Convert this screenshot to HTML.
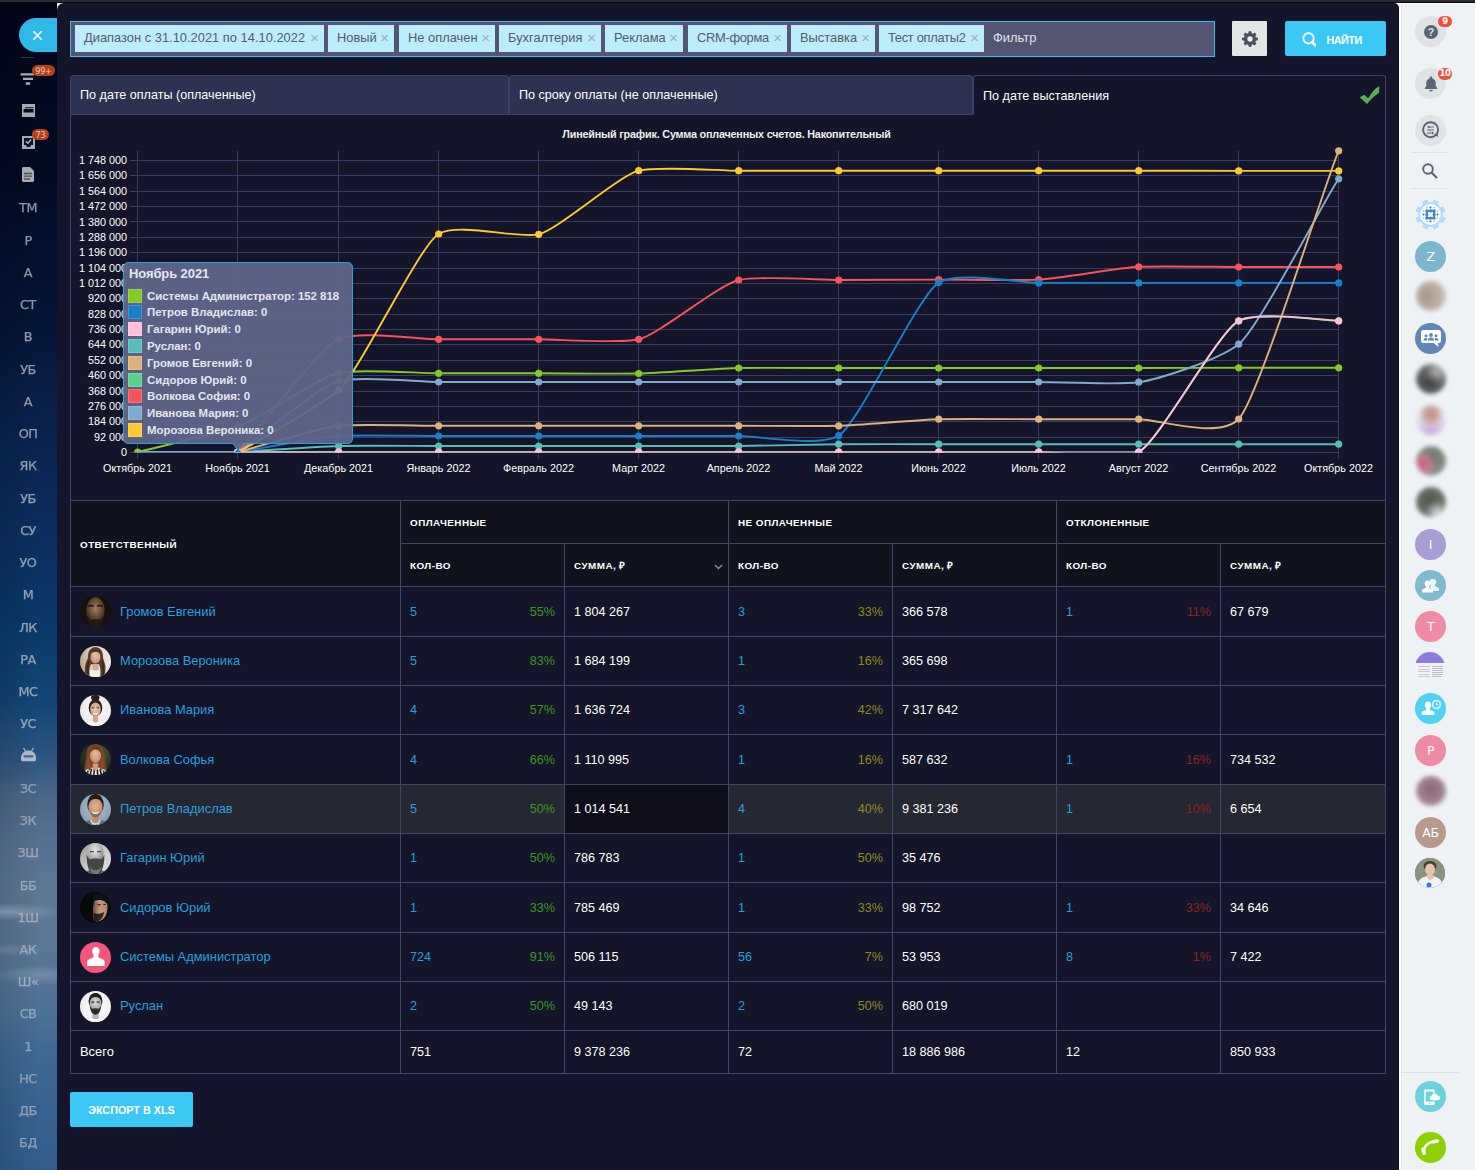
<!DOCTYPE html>
<html lang="ru"><head><meta charset="utf-8"><title>Отчет по счетам</title>
<style>
*{box-sizing:border-box;margin:0;padding:0}
html,body{width:1475px;height:1170px;overflow:hidden;background:#14152a;font-family:"Liberation Sans",Arial,sans-serif}
body{position:relative}
i{display:block;font-style:normal}
#topbar{position:absolute;left:0;top:0;width:1475px;height:3px;background:#2a2935;border-bottom:1px solid #08080a}
#left{position:absolute;left:0;top:0;width:57px;height:1170px;overflow:hidden;
 background:
 radial-gradient(ellipse 60px 9px at 8px 912px,rgba(190,205,222,.38),rgba(190,205,222,0) 100%),
 radial-gradient(ellipse 50px 10px at 40px 975px,rgba(180,198,216,.30),rgba(180,198,216,0) 100%),
 radial-gradient(ellipse 40px 7px at 5px 950px,rgba(180,198,216,.18),rgba(180,198,216,0) 100%),
 linear-gradient(90deg,rgba(0,0,0,.12),rgba(0,0,0,0) 70%),
 linear-gradient(180deg,#02051a 0,#020a22 14%,#051637 28%,#0a2a58 42%,#0a3768 52%,#124574 60%,#2b5580 64.500%,#4a6786 68%,#577290 72%,#5d7893 76%,#5a7794 81%,#4f7396 86%,#3f6993 90%,#37628f 95%,#325d8b 100%)}
#left>*{position:absolute}
.lclose{left:19px;top:18px;width:38px;height:34px;border-radius:17px 0 0 17px;background:#2fb9e8;display:flex;align-items:center;justify-content:flex-start;padding-left:13px}
.lsep{left:21px;top:57px;width:13px;height:1px;background:#2b3350}
.li{display:block}
.lb{height:11px;border-radius:6px;background:#b5401c;color:#ecc4b6;font-size:8.200px;line-height:12px;text-align:center;font-family:"DejaVu Sans","Liberation Sans",sans-serif;letter-spacing:-.3px}
.lt{left:0;width:56px;text-align:center;font-size:12.8px;line-height:20px;color:#d2d4d9;-webkit-text-stroke:.25px #d2d4d9;font-family:"DejaVu Sans","Liberation Sans",sans-serif;letter-spacing:-.5px}
#main{position:absolute;left:57px;top:3px;width:1342px;height:1167px;background:#14152a;border-radius:7px 5px 0 0}
#corner{position:absolute;left:57px;top:3px;width:7px;height:7px;background:#e8ecef}
#corner2{position:absolute;left:1392px;top:3px;width:7px;height:7px;background:#fff}
#abs{position:absolute;left:0;top:0;width:1475px;height:1170px}
#abs>*{position:absolute}
.fbox{left:70px;top:21px;width:1145px;height:36px;background:#535573;border:1px solid #35bdf0}
.chip{top:25px;height:27px;background:#bcedfc;color:#535c69;font-size:12.9px;line-height:26px;padding-left:9px;white-space:nowrap;overflow:hidden}
.chip b{font-weight:normal;color:#a3aab2;font-size:15px;position:absolute;right:5px;top:0}
.fph{left:993px;top:25px;line-height:26px;font-size:12.9px;color:#dfe1ea}
.gear{left:1232px;top:21px;width:35px;height:35px;background:#e4e5e6;border-radius:1px;display:flex;align-items:center;justify-content:center}
.find{left:1285px;top:21px;width:101px;height:35px;background:#3cc8f5;border-radius:2px;color:#fff;font-weight:bold;font-size:10.8px;display:flex;align-items:center;padding-left:17px;letter-spacing:-.5px}
.find span{margin-left:10.500px;position:relative;top:1.300px}
.tab{top:75px;height:40px;background:#2c3250;border:1px solid #3c4068;border-radius:3px 3px 0 0;color:#fff;font-size:12.6px;line-height:38px;padding-left:9px}
.tab.act{background:#14152a;border-bottom-color:#14152a;line-height:40px}
.chk{left:1359px;top:85px}
.panel{left:70px;top:114px;width:1316px;height:387px;border:1px solid #3c4068;border-top:0}
.chart{left:70px;top:116px;font-family:"Liberation Sans",Arial,sans-serif}
.tt{left:123px;top:262px;width:230px;height:182px;background:rgba(95,102,137,.94);border:1px solid #2f9fd8;border-radius:5px;color:#e3e6f2;font-weight:bold;font-family:"Liberation Sans",sans-serif}
.tt-t{position:absolute;left:5px;top:2px;font-size:13px;line-height:18px;letter-spacing:-.1px}
.tt-r{position:absolute;left:4px;height:15px;white-space:nowrap}
.tt-r i{position:absolute;left:0;top:0;width:14px;height:14px;box-shadow:inset 0 0 0 1px rgba(255,255,255,.18)}
.tt-r span{position:absolute;left:19px;top:0;font-size:11.4px;line-height:15px;letter-spacing:0}
.tt-p{left:230.500px;top:442.500px}
.th-bg{background:#10131d}
.hov{background:#252733}
.hov2{background:#0e0f1b}
.ln{background:#41456d}
.th{color:#fff;font-weight:bold;font-size:9.900px;line-height:14px;letter-spacing:.45px;text-transform:uppercase;white-space:nowrap}
.td{color:#fff;font-size:12.6px;line-height:20px;white-space:nowrap}
.td.nm,.td.lk{color:#2b9fdb}
.td.nm,.td.nm2{font-size:12.900px}
.td.pc{text-align:right}
.td.g{color:#3d961f}.td.o{color:#8d8b20}.td.r{color:#8b2320}
.avw{width:31px;height:31px}
.av{display:block}
.chev{display:block}
.xls{left:70px;top:1092px;width:123px;height:34.500px;background:#3cc8f5;border-radius:2px;color:#fff;font-weight:bold;font-size:10.800px;line-height:36.500px;text-align:center;letter-spacing:0}
#right{position:absolute;left:1399px;top:0;width:76px;height:1170px;background:#eef2f4}
#right>*{position:absolute}
.rc{border-radius:50%;display:flex;align-items:center;justify-content:center}
.rt{color:#fff;letter-spacing:-.4px;font-size:12.500px;font-family:"DejaVu Sans","Liberation Sans",sans-serif}
.rb{height:12px;border-radius:6px;background:#f0503c;color:#fff;font-size:8.500px;font-weight:bold;letter-spacing:-.4px;line-height:12px;text-align:center;font-family:"DejaVu Sans","Liberation Sans",sans-serif}
.rsep{left:12px;width:38px;height:1px;background:#dde2e6}
.ri{display:block}
.rbl{left:16.500px;width:30px;height:30px;border-radius:50%;filter:blur(2.200px)}
</style></head><body>
<div id="left">
<div class="lclose"><svg width="11" height="11" viewBox="0 0 11 11"><path d="M1.300 1.300l8.400 8.400M9.700 1.300l-8.400 8.400" stroke="#fff" stroke-width="1.600" fill="none"/></svg></div>
<i class="lsep"></i>
<svg class="li" style="left:20px;top:73px" width="16" height="13" viewBox="0 0 16 13"><path d="M0.600 0.200h13.300v2.300H0.600zM3 4.700h10v2.300H3zM5.800 9.300h4.300v2.400H5.800z" fill="#a9aaad"/></svg>
<span class="lb" style="left:32px;top:65px;width:23px">99+</span>
<svg class="li" style="left:22px;top:104px" width="13" height="13" viewBox="0 0 13 13"><path d="M0 0h13v13H0z" fill="#a9aaad"/><path d="M3 3.200h8.500v1.100H3zM1.500 5h10v3.500h-10z" fill="#060d26"/></svg>
<svg class="li" style="left:22px;top:135px" width="13" height="14" viewBox="0 0 13 14"><path d="M0 1h13v13H0z" fill="#a9aaad"/><path d="M2 3h9v7H9l-.8 2H4.800L4 10H2z" fill="#0a1230"/><path d="M3.800 6.300l2 2 3.300-3.800" stroke="#b5b6b9" stroke-width="1.300" fill="none"/></svg>
<span class="lb" style="left:32px;top:129px;width:17px">73</span>
<svg class="li" style="left:22px;top:167px" width="12" height="15" viewBox="0 0 12 15"><path d="M0 1.500C0 .7.700 0 1.500 0H8l4 4v9.500c0 .8-.7 1.500-1.500 1.500h-9C.7 15 0 14.300 0 13.500z" fill="#a9aaad"/><path d="M2 6.500h8M2 9.200h8M2 12h6" stroke="#4a5060" stroke-width="1.300"/></svg>
<div class="lt" style="top:197.8px;opacity:0.68">ТМ</div>
<div class="lt" style="top:230.8px;opacity:0.68">Р</div>
<div class="lt" style="top:262.8px;opacity:0.68">А</div>
<div class="lt" style="top:294.8px;opacity:0.68">СТ</div>
<div class="lt" style="top:326.8px;opacity:0.68">В</div>
<div class="lt" style="top:359.8px;opacity:0.68">УБ</div>
<div class="lt" style="top:391.8px;opacity:0.68">А</div>
<div class="lt" style="top:423.8px;opacity:0.68">ОП</div>
<div class="lt" style="top:455.8px;opacity:0.68">ЯК</div>
<div class="lt" style="top:488.8px;opacity:0.68">УБ</div>
<div class="lt" style="top:520.8px;opacity:0.68">СУ</div>
<div class="lt" style="top:552.8px;opacity:0.68">УО</div>
<div class="lt" style="top:584.8px;opacity:0.68">М</div>
<div class="lt" style="top:617.8px;opacity:0.68">ЛК</div>
<div class="lt" style="top:649.8px;opacity:0.68">РА</div>
<div class="lt" style="top:681.8px;opacity:0.68">МС</div>
<div class="lt" style="top:713.8px;opacity:0.68">УС</div>
<div class="lt" style="top:778.8px;opacity:0.55">ЗС</div>
<div class="lt" style="top:810.8px;opacity:0.55">ЗК</div>
<div class="lt" style="top:842.8px;opacity:0.55">ЗШ</div>
<div class="lt" style="top:875.8px;opacity:0.55">ББ</div>
<div class="lt" style="top:907.8px;opacity:0.55">1Ш</div>
<div class="lt" style="top:939.8px;opacity:0.55">АК</div>
<div class="lt" style="top:971.8px;opacity:0.55">Ш«</div>
<div class="lt" style="top:1003.8px;opacity:0.55">СВ</div>
<div class="lt" style="top:1036.8px;opacity:0.55">1</div>
<div class="lt" style="top:1068.8px;opacity:0.55">НС</div>
<div class="lt" style="top:1100.8px;opacity:0.55">ДБ</div>
<div class="lt" style="top:1132.8px;opacity:0.55">БД</div>
<svg class="li" style="left:20px;top:747px" width="17" height="15" viewBox="0 0 17 15"><path d="M3.500 1l2 3M13.500 1l-2 3" stroke="#aeb8c6" stroke-width="1.300"/><path d="M1 11.500C1 6.500 4 3.500 8.500 3.500S16 6.500 16 11.500v1c0 1-.8 1.800-1.800 1.800H2.800c-1 0-1.800-.8-1.800-1.800z" fill="#aeb8c6"/><rect x="3.500" y="8.300" width="10" height="2.300" rx="1.100" fill="#3c6790"/></svg>
</div>
<div id="corner"></div><div id="corner2"></div>
<div id="main"></div>
<div id="right">
<i style="left:0;top:0;width:1.500px;height:1170px;background:#fff"></i><i style="left:1.500px;top:0;width:1px;height:1170px;background:#e1e7ea"></i><i style="left:0;top:3px;width:76px;height:1px;background:#fff"></i>
<div class="rc" style="top:16.0px;width:31.0px;height:31.0px;left:16.0px;background:#dfe3e6;"><svg width="14" height="14" viewBox="0 0 14 14"><circle cx="7" cy="7" r="7" fill="#5a6472"/><text x="7" y="11" font-size="10.500" font-weight="bold" fill="#dfe3e6" text-anchor="middle" font-family="Liberation Sans,sans-serif">?</text></svg></div>
<span class="rb" style="left:39px;top:16px;width:14px;height:10.500px;line-height:10.500px">9</span>
<div class="rc" style="top:68.0px;width:31.0px;height:31.0px;left:16.0px;background:#dfe3e6;"><svg width="14" height="16" viewBox="0 0 14 16"><path d="M7 0.500c.7 0 1.200.5 1.200 1.200v.5c2.200.6 3.500 2.500 3.500 4.800v3l1.600 2.200v.8H.7v-.8l1.600-2.200V7c0-2.300 1.300-4.200 3.500-4.800v-.5C5.800 1 6.300.5 7 .5zM5.300 14h3.400c0 .9-.8 1.600-1.700 1.600s-1.700-.7-1.700-1.600z" fill="#5a6472"/></svg></div>
<span class="rb" style="left:39px;top:68px;width:14px;height:11.500px;line-height:11.500px">10</span>
<div class="rc" style="top:114.5px;width:31.0px;height:31.0px;left:16.0px;background:#dfe3e6;"><svg width="20" height="20" viewBox="0 0 20 20" style="margin:0 0 0 1.500px"><circle cx="9.600" cy="9.700" r="7.500" fill="none" stroke="#5a6472" stroke-width="1.900"/><path d="M13.300 14.800l4.200 2.300-1.500-4.300z" fill="#5a6472"/><path d="M7 7h5.800M6 10h7M6.200 13h5.800" stroke="#5a6472" stroke-width="1.100" fill="none"/><path d="M8.300 5.400L6 7l2.300 1.600zM11 11.400l2.300 1.600L11 14.600z" fill="#5a6472"/></svg></div>
<i class="rsep" style="top:152px"></i>
<svg class="ri" style="left:22px;top:162px" width="18" height="18" viewBox="0 0 18 18"><circle cx="7" cy="7" r="4.800" fill="none" stroke="#5a6472" stroke-width="1.900"/><path d="M10.500 10.500l5.500 5.500" stroke="#5a6472" stroke-width="2.200"/></svg>
<i class="rsep" style="top:188px"></i>
<svg class="ri" style="left:15.700px;top:198.900px" width="31" height="31" viewBox="-15.500 -15.500 31 31"><g fill="#b3ddf9"><circle r="12.400"/><rect x="-2.900" y="-15.200" width="5.800" height="6" rx="1" transform="rotate(22.5)"/><rect x="-2.900" y="-15.200" width="5.800" height="6" rx="1" transform="rotate(67.5)"/><rect x="-2.900" y="-15.200" width="5.800" height="6" rx="1" transform="rotate(112.5)"/><rect x="-2.900" y="-15.200" width="5.800" height="6" rx="1" transform="rotate(157.5)"/><rect x="-2.900" y="-15.200" width="5.800" height="6" rx="1" transform="rotate(202.5)"/><rect x="-2.900" y="-15.200" width="5.800" height="6" rx="1" transform="rotate(247.5)"/><rect x="-2.900" y="-15.200" width="5.800" height="6" rx="1" transform="rotate(292.5)"/><rect x="-2.900" y="-15.200" width="5.800" height="6" rx="1" transform="rotate(337.5)"/></g><circle r="10.400" fill="#fbfdff"/><rect x="-3.600" y="-3.600" width="7.200" height="7.200" fill="none" stroke="#4790cd" stroke-width="2.200"/><g fill="#3f89c8"><circle cx="-3.6" cy="-3.6" r="1.550"/><circle cx="-3.6" cy="0.0" r="1.550"/><circle cx="-3.6" cy="3.6" r="1.550"/><circle cx="0.0" cy="-3.6" r="1.550"/><circle cx="0.0" cy="3.6" r="1.550"/><circle cx="3.6" cy="-3.6" r="1.550"/><circle cx="3.6" cy="0.0" r="1.550"/><circle cx="3.6" cy="3.6" r="1.550"/></g><g fill="#3b78c4"><rect x="-.850" y="-.850" width="1.700" height="1.700" transform="translate(0 -7) rotate(45)"/><rect x="-.850" y="-.850" width="1.700" height="1.700" transform="translate(0 7) rotate(45)"/><rect x="-.850" y="-.850" width="1.700" height="1.700" transform="translate(-7 0) rotate(45)"/><rect x="-.850" y="-.850" width="1.700" height="1.700" transform="translate(7 0) rotate(45)"/></g><g stroke="#8fbbe3" stroke-width=".9"><path d="M-4.4 -7.0h1.800"/><path d="M-4.4 7.0h1.800"/><path d="M2.6 -7.0h1.800"/><path d="M2.6 7.0h1.800"/><path d="M-7.0 -4.3v1.600"/><path d="M-7.0 2.7v1.600"/><path d="M7.0 -4.3v1.600"/><path d="M7.0 2.7v1.600"/></g><g stroke="#7fb0de" stroke-width=".7"><path d="M0 -5.200V-6.200M0 5.200V6.200M-5.200 0H-6.200M5.200 0H6.200"/></g><circle r="1.500" fill="#fff"/><path d="M-1.200 -1.200L1.200 1.200M1.200 -1.200L-1.200 1.200" stroke="#f3d9c8" stroke-width=".5"/></svg>
<div class="rc" style="top:241.0px;width:31.0px;height:31.0px;left:16.0px;background:#7db7cf;"><span class="rt">Z</span></div>
<div class="rbl" style="top:281.0px;background:radial-gradient(circle at 35% 50%,#a89686 0,#b9aba0 45%,#d4ccc6 100%)"></div>
<div class="rc" style="top:323.0px;width:31.0px;height:31.0px;left:16.0px;background:#5f86b5;"><svg width="20" height="18" viewBox="0 0 20 18"><path d="M2.500 0h15a2.500 2.500 0 0 1 2.500 2.500v8a2.500 2.500 0 0 1-2.500 2.500h-.5l.5 4-5-4H2.500a2.500 2.500 0 0 1-2.500-2.500v-8A2.500 2.500 0 0 1 2.500 0z" fill="#fff"/><g fill="#5f86b5"><circle cx="10" cy="5" r="1.900"/><path d="M6.800 10.500c0-2 1.400-3 3.200-3s3.200 1 3.200 3z"/><circle cx="5" cy="5.800" r="1.500"/><path d="M2.500 10.500c0-1.700 1-2.500 2.500-2.500.6 0 1.100.1 1.500.4-.5.600-.7 1.300-.7 2.100z"/><circle cx="15" cy="5.800" r="1.500"/><path d="M17.500 10.500c0-1.700-1-2.500-2.500-2.500-.6 0-1.100.1-1.500.4.500.6.700 1.300.700 2.100z"/></g></svg></div>
<div class="rbl" style="top:364.0px;background:radial-gradient(circle at 70% 25%,#b5b5b5 0,rgba(120,120,120,0) 40%),radial-gradient(circle at 45% 60%,#3d3d3f 0,#6a6a6c 60%,#9a9a9c 100%)"></div>
<div class="rbl" style="top:405.0px;background:radial-gradient(circle at 50% 30%,#b98a84 0,#c9a59c 25%,rgba(230,225,228,0) 50%),radial-gradient(circle at 50% 95%,#c4a8dc 0,#d8cbe6 35%,#e9e9ee 70%)"></div>
<div class="rbl" style="top:446.0px;background:radial-gradient(circle at 25% 60%,#d4567f 0,#c87a94 22%,rgba(130,135,128,0) 42%),radial-gradient(circle at 55% 40%,#6f756c 0,#8a8f88 55%,#c4c6c4 100%)"></div>
<div class="rbl" style="top:487.0px;background:radial-gradient(circle at 70% 85%,#d9dce2 0,rgba(200,200,200,0) 35%),radial-gradient(circle at 45% 45%,#4f554e 0,#6a7268 55%,#8f968c 100%)"></div>
<div class="rc" style="top:529.0px;width:31.0px;height:31.0px;left:16.0px;background:#a99dd6;"><span class="rt">I</span></div>
<div class="rc" style="top:570.0px;width:31.0px;height:31.0px;left:16.0px;background:#80bace;"><svg width="20" height="14" viewBox="0 0 20 14"><g fill="#fff"><path d="M12.500 0c1.700 0 2.700 1.300 2.700 3 0 1.200-.5 2.300-1.200 2.900v.8c0 .3.200.6.500.7l2.400 1c.6.300 1 .8 1 1.500V12h-7.500v-1.500c0-1-.6-1.900-1.500-2.300l-.9-.4 1.300-.5c.3-.1.500-.4.500-.7v-.8c-.7-.6-1.200-1.700-1.200-2.900 0-1.700 1-3 2.700-3z" opacity=".85"/><path d="M6.500 1.500c1.700 0 2.700 1.300 2.700 3 0 1.200-.5 2.300-1.200 2.900v.8c0 .3.200.6.500.7l2.400 1c.6.300 1 .8 1 1.500V13.500H1v-2.100c0-.7.400-1.200 1-1.500l2.400-1c.3-.1.500-.4.500-.7v-.8c-.7-.6-1.200-1.700-1.200-2.900 0-1.700 1-3 2.700-3z"/></g></svg></div>
<div class="rc" style="top:611.0px;width:31.0px;height:31.0px;left:16.0px;background:#f08ba7;"><span class="rt">Т</span></div>
<div class="rc" style="top:652px;left:16px;width:30px;height:30px;background:#f3f3f5;overflow:hidden;display:block"><i style="position:absolute;left:0;top:0;width:30px;height:11px;background:#8d7be0"></i><i style="position:absolute;left:3px;top:13px;width:12px;height:12px;background:repeating-linear-gradient(#f3f3f5 0 1.500px,#c9c9d2 1.500px 2.500px)"></i><i style="position:absolute;left:17px;top:13px;width:11px;height:12px;background:repeating-linear-gradient(#f3f3f5 0 1px,#bdbdc8 1px 2px)"></i></div>
<div class="rc" style="top:693.0px;width:31.0px;height:31.0px;left:16.0px;background:#50d2f5;"><svg width="22" height="17" viewBox="0 0 22 17"><g fill="#fff"><path d="M8 1.500c2 0 3.200 1.500 3.200 3.500 0 1.400-.6 2.700-1.400 3.400v.9c0 .4.200.7.600.9l2.800 1.100c.7.300 1.200 1 1.200 1.700v2H1.600v-2c0-.8.500-1.400 1.200-1.700l2.800-1.100c.4-.2.600-.5.600-.9v-.9C5.400 7.700 4.800 6.400 4.800 5c0-2 1.200-3.500 3.200-3.500z"/><circle cx="16.500" cy="4.500" r="4.500"/></g><circle cx="16.500" cy="4.500" r="3.200" fill="#50d2f5"/><path d="M16.500 2.500v2.200h1.800" stroke="#fff" stroke-width="1" fill="none"/></svg></div>
<div class="rc" style="top:735.0px;width:31.0px;height:31.0px;left:16.0px;background:#f08ba7;"><span class="rt">Р</span></div>
<div class="rbl" style="top:776.0px;background:radial-gradient(circle at 50% 45%,#8a6478 0,#a07f90 50%,#c0a4ae 100%)"></div>
<div class="rc" style="top:817.0px;width:31.0px;height:31.0px;left:16.0px;background:#ba998d;"><span class="rt">АБ</span></div>
<div class="rc" style="top:858px;left:16px;width:30px;height:30px;background:#7f8a78;overflow:hidden;display:block"><svg width="30" height="30" viewBox="0 0 30 30"><rect width="30" height="30" fill="#8a937f"/><ellipse cx="15" cy="8" rx="6.500" ry="5" fill="#4a3a30"/><ellipse cx="15" cy="11.500" rx="5" ry="6" fill="#e6c3ae"/><path d="M2 30c0-8 5-12 13-12s13 4 13 12z" fill="#f1f3f6"/><circle cx="14" cy="27" r="2.500" fill="#3c78d8"/><path d="M11 17l3 5 4-1 1-4z" fill="#e6c3ae"/></svg></div>
<i class="rsep" style="top:1072px;width:58px;left:2px;background:#d7e1e6"></i>
<div class="rc" style="top:1081.4px;width:31.0px;height:31.0px;left:16.0px;background:#6dd2e0;"><svg width="17" height="17" viewBox="0 0 17 17" style="margin:1.500px 0 0 2.500px"><path d="M2.800 0.500h7.400c.9 0 1.600.7 1.600 1.600V4h-1.700V2.500H2.700v10.300h7.400v-.6h1.700v2.200c0 .9-.7 1.600-1.600 1.600H2.800c-.9 0-1.600-.7-1.600-1.600V2.100c0-.9.700-1.600 1.600-1.600z" fill="#fff"/><circle cx="6.500" cy="14.400" r=".7" fill="#6dd2e0"/><path d="M8.800 11.200c-1.300 0-2.300-.9-2.300-2.100 0-1.100.8-2 1.900-2.100.3-1.500 1.600-2.600 3.200-2.600 1.500 0 2.700.9 3.100 2.200 1.300.1 2.300 1.100 2.300 2.300s-1.100 2.300-2.500 2.300z" fill="#fff"/></svg></div>
<div class="rc" style="top:1132.1px;width:30.6px;height:30.6px;left:16.2px;background:#8ed000;"><svg width="18" height="16" viewBox="-9 -8 18 16"><path d="M-6.300 4.600A10.500 10.500 0 0 1 5.800-5.200" fill="none" stroke="#fff" stroke-width="2.600"/><path d="M-6.800 2.300L-5.900 6.200" stroke="#fff" stroke-width="3.800" stroke-linecap="round"/><path d="M3.600-5.200L7.200-6" stroke="#fff" stroke-width="3.600" stroke-linecap="round"/></svg></div>
</div>
<div id="topbar"></div>
<div id="abs">
<div class="fbox"></div>
<div class="chip" style="left:75px;width:249px"><span>Диапазон с 31.10.2021 по 14.10.2022</span><b>×</b></div>
<div class="chip" style="left:328px;width:66px"><span>Новый</span><b>×</b></div>
<div class="chip" style="left:399px;width:96px"><span>Не оплачен</span><b>×</b></div>
<div class="chip" style="left:499px;width:102px"><span>Бухгалтерия</span><b>×</b></div>
<div class="chip" style="left:605px;width:78px"><span>Реклама</span><b>×</b></div>
<div class="chip" style="left:688px;width:99px"><span style="letter-spacing:-.3px">CRM-форма</span><b>×</b></div>
<div class="chip" style="left:791px;width:84px"><span>Выставка</span><b>×</b></div>
<div class="chip" style="left:879px;width:105px"><span style="letter-spacing:-.3px">Тест оплаты2</span><b>×</b></div>
<div class="fph">Фильтр</div>
<div class="gear"><svg width="16" height="16" viewBox="0 0 16 16"><path fill="#4b515c" d="M8 0l1.300.2.400 2 1.200.5L12.600 1.500l1.900 1.900-1.200 1.700.5 1.200 2 .4L16 8l-.2 1.300-2 .4-.5 1.200 1.200 1.700-1.900 1.900-1.700-1.200-1.200.5-.4 2L8 16l-1.300-.2-.4-2-1.200-.5-1.700 1.200-1.900-1.900 1.200-1.700-.5-1.200-2-.4L0 8l.2-1.300 2-.4.5-1.200L1.500 3.400l1.900-1.900 1.700 1.200 1.200-.5.400-2z"/><circle cx="8" cy="8" r="2.700" fill="#eef0f2"/></svg></div>
<div class="find"><svg width="14" height="15" viewBox="0 0 14 15" style="position:relative;top:.500px"><circle cx="6.500" cy="6.300" r="5.200" fill="none" stroke="#fff" stroke-width="1.800"/><path d="M10.300 10.300l3 2.900" stroke="#fff" stroke-width="2.800" stroke-linecap="round"/></svg><span>НАЙТИ</span></div>
<div class="tab" style="left:70px;width:439px">По дате оплаты (оплаченные)</div>
<div class="tab" style="left:509px;width:464px">По сроку оплаты (не оплаченные)</div>
<div class="tab act" style="left:973px;width:413px">По дате выставления</div>
<svg class="chk" width="22" height="20" viewBox="1359 85 22 20"><path d="M1359.700 97.600L1364 94.800L1368.300 98.200C1371 93.500 1374.500 89 1378.700 86.300L1379.400 86.800L1379 93C1374.500 95.500 1370.500 99.500 1367.100 104.100Z" fill="#5aaa5a"/></svg>
<div class="panel"></div>
<svg class="chart" width="1316" height="384" viewBox="70 116 1316 384">
<g stroke="#3a3d63" stroke-width="1" fill="none"><path d="M137.5,151V459"/><path d="M237.5,151V459"/><path d="M338.5,151V459"/><path d="M438.5,151V459"/><path d="M538.5,151V459"/><path d="M638.5,151V459"/><path d="M738.5,151V459"/><path d="M838.5,151V459"/><path d="M938.5,151V459"/><path d="M1038.5,151V459"/><path d="M1138.5,151V459"/><path d="M1238.5,151V459"/><path d="M1338.5,151V459"/><path d="M130,452.5H1339"/><path d="M130,437.5H1339"/><path d="M130,421.5H1339"/><path d="M130,406.5H1339"/><path d="M130,391.5H1339"/><path d="M130,375.5H1339"/><path d="M130,360.5H1339"/><path d="M130,344.5H1339"/><path d="M130,329.5H1339"/><path d="M130,314.5H1339"/><path d="M130,298.5H1339"/><path d="M130,283.5H1339"/><path d="M130,268.5H1339"/><path d="M130,252.5H1339"/><path d="M130,237.5H1339"/><path d="M130,221.5H1339"/><path d="M130,206.5H1339"/><path d="M130,191.5H1339"/><path d="M130,175.5H1339"/><path d="M130,160.5H1339"/></g>
<g class="yl" font-size="10.8" fill="#fff" text-anchor="end">
<text x="127" y="456.0">0</text>
<text x="127" y="440.6">92 000</text>
<text x="127" y="425.3">184 000</text>
<text x="127" y="409.9">276 000</text>
<text x="127" y="394.5">368 000</text>
<text x="127" y="379.1">460 000</text>
<text x="127" y="363.8">552 000</text>
<text x="127" y="348.4">644 000</text>
<text x="127" y="333.0">736 000</text>
<text x="127" y="317.7">828 000</text>
<text x="127" y="302.3">920 000</text>
<text x="127" y="286.9">1 012 000</text>
<text x="127" y="271.6">1 104 000</text>
<text x="127" y="256.2">1 196 000</text>
<text x="127" y="240.8">1 288 000</text>
<text x="127" y="225.5">1 380 000</text>
<text x="127" y="210.1">1 472 000</text>
<text x="127" y="194.7">1 564 000</text>
<text x="127" y="179.3">1 656 000</text>
<text x="127" y="164.0">1 748 000</text>
</g>
<g class="xl" font-size="10.8" fill="#fff" text-anchor="middle">
<text x="137.5" y="471.5">Октябрь 2021</text>
<text x="237.5" y="471.5">Ноябрь 2021</text>
<text x="338.5" y="471.5">Декабрь 2021</text>
<text x="438.5" y="471.5">Январь 2022</text>
<text x="538.5" y="471.5">Февраль 2022</text>
<text x="638.5" y="471.5">Март 2022</text>
<text x="738.5" y="471.5">Апрель 2022</text>
<text x="838.5" y="471.5">Май 2022</text>
<text x="938.5" y="471.5">Июнь 2022</text>
<text x="1038.5" y="471.5">Июль 2022</text>
<text x="1138.5" y="471.5">Август 2022</text>
<text x="1238.5" y="471.5">Сентябрь 2022</text>
<text x="1338.5" y="471.5">Октябрь 2022</text>
</g>
<text x="726.5" y="138" font-size="10.8" letter-spacing="-0.2" font-weight="bold" fill="#eee" text-anchor="middle">Линейный график. Сумма оплаченных счетов. Накопительный</text>
<defs><clipPath id="plot"><rect x="130" y="140" width="1230" height="312.500"/></clipPath></defs>
<g clip-path="url(#plot)">
<path d="M137.7,452.0 C147.7,450.0 217.6,432.6 237.7,426.5 C257.8,420.4 318.6,376.8 338.7,372.7 C358.8,368.6 418.7,373.3 438.7,373.3 C458.7,373.3 518.7,373.3 538.7,373.3 C558.7,373.3 618.7,373.9 638.7,373.5 C658.7,373.1 718.7,368.4 738.7,368.0 C758.7,367.6 818.7,368.0 838.7,368.0 C858.7,368.0 918.7,368.0 938.7,368.0 C958.7,368.0 1018.7,368.0 1038.7,368.0 C1058.7,368.0 1118.7,368.0 1138.7,368.0 C1158.7,368.0 1218.7,367.8 1238.7,367.8 C1258.7,367.8 1328.7,367.8 1338.7,367.8" fill="none" stroke="#84c926" stroke-width="1.900" stroke-linecap="round"/>
<g fill="#84c926"><circle cx="137.7" cy="452.0" r="3.600"/><circle cx="237.7" cy="426.5" r="3.600"/><circle cx="338.7" cy="372.7" r="3.600"/><circle cx="438.7" cy="373.3" r="3.600"/><circle cx="538.7" cy="373.3" r="3.600"/><circle cx="638.7" cy="373.5" r="3.600"/><circle cx="738.7" cy="368.0" r="3.600"/><circle cx="838.7" cy="368.0" r="3.600"/><circle cx="938.7" cy="368.0" r="3.600"/><circle cx="1038.7" cy="368.0" r="3.600"/><circle cx="1138.7" cy="368.0" r="3.600"/><circle cx="1238.7" cy="367.8" r="3.600"/><circle cx="1338.7" cy="367.8" r="3.600"/></g>
<path d="M237.7,452.0 C247.8,452.0 318.6,452.0 338.7,452.0 C358.8,452.0 418.7,452.0 438.7,452.0 C458.7,452.0 518.7,452.0 538.7,452.0 C558.7,452.0 618.7,452.0 638.7,452.0 C658.7,452.0 718.7,452.0 738.7,452.0 C758.7,452.0 818.7,452.0 838.7,452.0 C858.7,452.0 918.7,452.0 938.7,452.0 C958.7,452.0 1018.7,452.0 1038.7,452.0 C1058.7,452.0 1118.7,462.1 1138.7,452.0 C1158.7,441.9 1218.7,331.1 1238.7,321.0 C1258.7,310.9 1328.7,321.0 1338.7,321.0" fill="none" stroke="#5bd08d" stroke-width="1.900" stroke-linecap="round"/>
<g fill="#5bd08d"><circle cx="237.7" cy="452.0" r="3.600"/><circle cx="338.7" cy="452.0" r="3.600"/><circle cx="438.7" cy="452.0" r="3.600"/><circle cx="538.7" cy="452.0" r="3.600"/><circle cx="638.7" cy="452.0" r="3.600"/><circle cx="738.7" cy="452.0" r="3.600"/><circle cx="838.7" cy="452.0" r="3.600"/><circle cx="938.7" cy="452.0" r="3.600"/><circle cx="1038.7" cy="452.0" r="3.600"/><circle cx="1138.7" cy="452.0" r="3.600"/><circle cx="1238.7" cy="321.0" r="3.600"/><circle cx="1338.7" cy="321.0" r="3.600"/></g>
<path d="M237.7,452.0 C247.8,451.5 318.6,446.5 338.7,446.0 C358.8,445.5 418.7,446.0 438.7,446.0 C458.7,446.0 518.7,446.0 538.7,446.0 C558.7,446.0 618.7,446.0 638.7,446.0 C658.7,446.0 718.7,446.1 738.7,446.0 C758.7,445.9 818.7,444.3 838.7,444.2 C858.7,444.1 918.7,444.2 938.7,444.2 C958.7,444.2 1018.7,444.2 1038.7,444.2 C1058.7,444.2 1118.7,444.2 1138.7,444.2 C1158.7,444.2 1218.7,444.2 1238.7,444.2 C1258.7,444.2 1328.7,444.2 1338.7,444.2" fill="none" stroke="#57bdb7" stroke-width="1.900" stroke-linecap="round"/>
<g fill="#57bdb7"><circle cx="237.7" cy="452.0" r="3.600"/><circle cx="338.7" cy="446.0" r="3.600"/><circle cx="438.7" cy="446.0" r="3.600"/><circle cx="538.7" cy="446.0" r="3.600"/><circle cx="638.7" cy="446.0" r="3.600"/><circle cx="738.7" cy="446.0" r="3.600"/><circle cx="838.7" cy="444.2" r="3.600"/><circle cx="938.7" cy="444.2" r="3.600"/><circle cx="1038.7" cy="444.2" r="3.600"/><circle cx="1138.7" cy="444.2" r="3.600"/><circle cx="1238.7" cy="444.2" r="3.600"/><circle cx="1338.7" cy="444.2" r="3.600"/></g>
<path d="M237.7,452.0 C247.8,443.3 318.6,347.7 338.7,339.0 C358.8,330.3 418.7,339.3 438.7,339.3 C458.7,339.3 518.7,339.3 538.7,339.3 C558.7,339.3 618.7,343.9 638.7,339.3 C658.7,334.7 718.7,284.6 738.7,280.0 C758.7,275.4 818.7,280.0 838.7,280.0 C858.7,280.0 918.7,279.6 938.7,279.6 C958.7,279.6 1018.7,280.6 1038.7,279.6 C1058.7,278.6 1118.7,267.8 1138.7,266.8 C1158.7,265.8 1218.7,267.0 1238.7,267.0 C1258.7,267.0 1328.7,267.0 1338.7,267.0" fill="none" stroke="#f9525c" stroke-width="1.900" stroke-linecap="round"/>
<g fill="#f9525c"><circle cx="237.7" cy="452.0" r="3.600"/><circle cx="338.7" cy="339.0" r="3.600"/><circle cx="438.7" cy="339.3" r="3.600"/><circle cx="538.7" cy="339.3" r="3.600"/><circle cx="638.7" cy="339.3" r="3.600"/><circle cx="738.7" cy="280.0" r="3.600"/><circle cx="838.7" cy="280.0" r="3.600"/><circle cx="938.7" cy="279.6" r="3.600"/><circle cx="1038.7" cy="279.6" r="3.600"/><circle cx="1138.7" cy="266.8" r="3.600"/><circle cx="1238.7" cy="267.0" r="3.600"/><circle cx="1338.7" cy="267.0" r="3.600"/></g>
<path d="M237.7,452.0 C247.8,450.8 318.6,437.2 338.7,436.0 C358.8,434.8 418.7,436.0 438.7,436.0 C458.7,436.0 518.7,436.0 538.7,436.0 C558.7,436.0 618.7,436.0 638.7,436.0 C658.7,436.0 718.7,436.0 738.7,436.0 C758.7,436.0 818.7,447.4 838.7,435.6 C858.7,423.8 918.7,294.4 938.7,282.6 C958.7,270.8 1018.7,282.9 1038.7,282.9 C1058.7,282.9 1118.7,282.9 1138.7,282.9 C1158.7,282.9 1218.7,282.9 1238.7,282.9 C1258.7,282.9 1328.7,282.9 1338.7,282.9" fill="none" stroke="#1a7fcb" stroke-width="1.900" stroke-linecap="round"/>
<g fill="#1a7fcb"><circle cx="237.7" cy="452.0" r="3.600"/><circle cx="338.7" cy="436.0" r="3.600"/><circle cx="438.7" cy="436.0" r="3.600"/><circle cx="538.7" cy="436.0" r="3.600"/><circle cx="638.7" cy="436.0" r="3.600"/><circle cx="738.7" cy="436.0" r="3.600"/><circle cx="838.7" cy="435.6" r="3.600"/><circle cx="938.7" cy="282.6" r="3.600"/><circle cx="1038.7" cy="282.9" r="3.600"/><circle cx="1138.7" cy="282.9" r="3.600"/><circle cx="1238.7" cy="282.9" r="3.600"/><circle cx="1338.7" cy="282.9" r="3.600"/></g>
<path d="M237.7,452.0 C247.8,446.5 318.6,386.4 338.7,381.0 C358.8,375.6 418.7,381.9 438.7,382.0 C458.7,382.1 518.7,382.0 538.7,382.0 C558.7,382.0 618.7,382.0 638.7,382.0 C658.7,382.0 718.7,382.0 738.7,382.0 C758.7,382.0 818.7,382.0 838.7,382.0 C858.7,382.0 918.7,382.0 938.7,382.0 C958.7,382.0 1018.7,382.0 1038.7,382.0 C1058.7,382.0 1118.7,385.1 1138.7,382.2 C1158.7,379.3 1218.7,359.9 1238.7,344.2 C1258.7,328.5 1328.7,191.5 1338.7,178.8" fill="none" stroke="#7fa9cd" stroke-width="1.900" stroke-linecap="round"/>
<path d="M137.5,452H237.5" stroke="#7fa9cd" stroke-width="1.900"/>
<g fill="#7fa9cd"><circle cx="237.7" cy="452.0" r="3.600"/><circle cx="338.7" cy="381.0" r="3.600"/><circle cx="438.7" cy="382.0" r="3.600"/><circle cx="538.7" cy="382.0" r="3.600"/><circle cx="638.7" cy="382.0" r="3.600"/><circle cx="738.7" cy="382.0" r="3.600"/><circle cx="838.7" cy="382.0" r="3.600"/><circle cx="938.7" cy="382.0" r="3.600"/><circle cx="1038.7" cy="382.0" r="3.600"/><circle cx="1138.7" cy="382.2" r="3.600"/><circle cx="1238.7" cy="344.2" r="3.600"/><circle cx="1338.7" cy="178.8" r="3.600"/></g>
<path d="M237.7,452.0 C247.8,447.2 318.6,406.8 338.7,390.0 C358.8,373.2 418.7,246.0 438.7,234.0 C458.7,222.0 518.7,239.2 538.7,234.3 C558.7,229.4 618.7,175.6 638.7,170.7 C658.7,165.8 718.7,170.7 738.7,170.7 C758.7,170.7 818.7,170.7 838.7,170.7 C858.7,170.7 918.7,170.7 938.7,170.7 C958.7,170.7 1018.7,170.7 1038.7,170.7 C1058.7,170.7 1118.7,170.7 1138.7,170.7 C1158.7,170.7 1218.7,170.9 1238.7,170.9 C1258.7,170.9 1328.7,170.9 1338.7,170.9" fill="none" stroke="#fdc830" stroke-width="1.900" stroke-linecap="round"/>
<g fill="#fdc830"><circle cx="237.7" cy="452.0" r="3.600"/><circle cx="338.7" cy="390.0" r="3.600"/><circle cx="438.7" cy="234.0" r="3.600"/><circle cx="538.7" cy="234.3" r="3.600"/><circle cx="638.7" cy="170.7" r="3.600"/><circle cx="738.7" cy="170.7" r="3.600"/><circle cx="838.7" cy="170.7" r="3.600"/><circle cx="938.7" cy="170.7" r="3.600"/><circle cx="1038.7" cy="170.7" r="3.600"/><circle cx="1138.7" cy="170.7" r="3.600"/><circle cx="1238.7" cy="170.9" r="3.600"/><circle cx="1338.7" cy="170.9" r="3.600"/></g>
<path d="M237.7,452.0 C247.8,450.0 318.6,427.8 338.7,425.8 C358.8,423.8 418.7,425.8 438.7,425.8 C458.7,425.8 518.7,425.8 538.7,425.8 C558.7,425.8 618.7,425.8 638.7,425.8 C658.7,425.8 718.7,425.8 738.7,425.8 C758.7,425.8 818.7,426.3 838.7,425.8 C858.7,425.3 918.7,419.7 938.7,419.2 C958.7,418.7 1018.7,419.2 1038.7,419.2 C1058.7,419.2 1118.7,419.2 1138.7,419.2 C1158.7,419.2 1218.7,439.7 1238.7,419.0 C1258.7,398.3 1328.7,171.5 1338.7,150.8" fill="none" stroke="#deb07c" stroke-width="1.900" stroke-linecap="round"/>
<g fill="#deb07c"><circle cx="237.7" cy="452.0" r="3.600"/><circle cx="338.7" cy="425.8" r="3.600"/><circle cx="438.7" cy="425.8" r="3.600"/><circle cx="538.7" cy="425.8" r="3.600"/><circle cx="638.7" cy="425.8" r="3.600"/><circle cx="738.7" cy="425.8" r="3.600"/><circle cx="838.7" cy="425.8" r="3.600"/><circle cx="938.7" cy="419.2" r="3.600"/><circle cx="1038.7" cy="419.2" r="3.600"/><circle cx="1138.7" cy="419.2" r="3.600"/><circle cx="1238.7" cy="419.0" r="3.600"/><circle cx="1338.7" cy="150.8" r="3.600"/></g>
<path d="M237.7,452.0 C247.8,452.0 318.6,452.0 338.7,452.0 C358.8,452.0 418.7,452.0 438.7,452.0 C458.7,452.0 518.7,452.0 538.7,452.0 C558.7,452.0 618.7,452.0 638.7,452.0 C658.7,452.0 718.7,452.0 738.7,452.0 C758.7,452.0 818.7,452.0 838.7,452.0 C858.7,452.0 918.7,452.0 938.7,452.0 C958.7,452.0 1018.7,452.0 1038.7,452.0 C1058.7,452.0 1118.7,462.1 1138.7,452.0 C1158.7,441.9 1218.7,330.9 1238.7,320.8 C1258.7,310.7 1328.7,320.8 1338.7,320.8" fill="none" stroke="#fdbfd8" stroke-width="1.900" stroke-linecap="round"/>
<g fill="#fdbfd8"><circle cx="237.7" cy="452.0" r="3.600"/><circle cx="338.7" cy="452.0" r="3.600"/><circle cx="438.7" cy="452.0" r="3.600"/><circle cx="538.7" cy="452.0" r="3.600"/><circle cx="638.7" cy="452.0" r="3.600"/><circle cx="738.7" cy="452.0" r="3.600"/><circle cx="838.7" cy="452.0" r="3.600"/><circle cx="938.7" cy="452.0" r="3.600"/><circle cx="1038.7" cy="452.0" r="3.600"/><circle cx="1138.7" cy="452.0" r="3.600"/><circle cx="1238.7" cy="320.8" r="3.600"/><circle cx="1338.7" cy="320.8" r="3.600"/></g>
<path d="M243.7,452.1H1135.7" stroke="#bab3b4" stroke-width="1.700"/>
<g fill="#fdbfd8"><circle cx="338.7" cy="452" r="3.600"/><circle cx="438.7" cy="452" r="3.600"/><circle cx="538.7" cy="452" r="3.600"/><circle cx="638.7" cy="452" r="3.600"/><circle cx="738.7" cy="452" r="3.600"/><circle cx="838.7" cy="452" r="3.600"/><circle cx="938.7" cy="452" r="3.600"/><circle cx="1038.7" cy="452" r="3.600"/><circle cx="1138.7" cy="452" r="3.600"/></g>
</g>
</svg>
<div class="tt"><div class="tt-t">Ноябрь 2021</div>
<div class="tt-r" style="top:25.5px"><i style="background:#84c926"></i><span>Системы Администратор: 152 818</span></div>
<div class="tt-r" style="top:42.3px"><i style="background:#1a7fcb"></i><span>Петров Владислав: 0</span></div>
<div class="tt-r" style="top:59.1px"><i style="background:#fdbfd8"></i><span>Гагарин Юрий: 0</span></div>
<div class="tt-r" style="top:75.9px"><i style="background:#57bdb7"></i><span>Руслан: 0</span></div>
<div class="tt-r" style="top:92.7px"><i style="background:#deb07c"></i><span>Громов Евгений: 0</span></div>
<div class="tt-r" style="top:109.5px"><i style="background:#5bd08d"></i><span>Сидоров Юрий: 0</span></div>
<div class="tt-r" style="top:126.3px"><i style="background:#f9525c"></i><span>Волкова София: 0</span></div>
<div class="tt-r" style="top:143.1px"><i style="background:#7fa9cd"></i><span>Иванова Мария: 0</span></div>
<div class="tt-r" style="top:159.9px"><i style="background:#fdc830"></i><span>Морозова Вероника: 0</span></div>
</div>
<svg class="tt-p" width="14" height="10" viewBox="0 0 14 10"><path d="M1.500,0 L7,7.500 L12.500,0 Z" fill="#5f6689"/><path d="M0,0.500 L1.800,0.500 L7,7.600 L12.200,0.500 L14,0.500" fill="none" stroke="#2f9fd8" stroke-width="1"/><path d="M3.600,9.500 A3.500,3.500 0 0 1 10.400,9.500 Z" fill="#1a7fcb"/></svg>
<div class="th-bg" style="left:70px;top:500px;width:1316px;height:87px"></div>
<div class="hov" style="left:71px;top:785px;width:1314px;height:48px"></div>
<div class="hov2" style="left:565px;top:785px;width:163px;height:48px"></div>
<i class="ln" style="left:70px;top:500px;width:1316px;height:1px"></i>
<i class="ln" style="left:400px;top:543px;width:986px;height:1px"></i>
<i class="ln" style="left:70px;top:586px;width:1316px;height:1px"></i>
<i class="ln" style="left:70px;top:636px;width:1316px;height:1px"></i>
<i class="ln" style="left:70px;top:685px;width:1316px;height:1px"></i>
<i class="ln" style="left:70px;top:734px;width:1316px;height:1px"></i>
<i class="ln" style="left:70px;top:784px;width:1316px;height:1px"></i>
<i class="ln" style="left:70px;top:833px;width:1316px;height:1px"></i>
<i class="ln" style="left:70px;top:882px;width:1316px;height:1px"></i>
<i class="ln" style="left:70px;top:932px;width:1316px;height:1px"></i>
<i class="ln" style="left:70px;top:981px;width:1316px;height:1px"></i>
<i class="ln" style="left:70px;top:1030px;width:1316px;height:1px"></i>
<i class="ln" style="left:70px;top:1073px;width:1316px;height:1px"></i>
<i class="ln" style="left:70px;top:500px;width:1px;height:574px"></i>
<i class="ln" style="left:1385px;top:500px;width:1px;height:574px"></i>
<i class="ln" style="left:400px;top:500px;width:1px;height:573px"></i>
<i class="ln" style="left:728px;top:500px;width:1px;height:573px"></i>
<i class="ln" style="left:1056px;top:500px;width:1px;height:573px"></i>
<i class="ln" style="left:564px;top:543px;width:1px;height:530px"></i>
<i class="ln" style="left:892px;top:543px;width:1px;height:530px"></i>
<i class="ln" style="left:1220px;top:543px;width:1px;height:530px"></i>
<div class="th" style="left:80px;top:537.5px">Ответственный</div>
<div class="th" style="left:410px;top:515.5px">Оплаченные</div>
<div class="th" style="left:738px;top:515.5px">Не оплаченные</div>
<div class="th" style="left:1066px;top:515.5px">Отклоненные</div>
<div class="th" style="left:410px;top:559.0px">Кол-во</div>
<div class="th" style="left:738px;top:559.0px">Кол-во</div>
<div class="th" style="left:1066px;top:559.0px">Кол-во</div>
<div class="th" style="left:574px;top:559.0px">Сумма, ₽</div>
<div class="th" style="left:902px;top:559.0px">Сумма, ₽</div>
<div class="th" style="left:1230px;top:559.0px">Сумма, ₽</div>
<svg class="chev" style="left:714px;top:564px" width="9" height="6" viewBox="0 0 9 6"><path d="M1 1l3.500 3.500L8 1" fill="none" stroke="#8a8da6" stroke-width="1.400"/></svg>
<div class="avw" style="left:80px;top:596.0px"><svg class="av" width="31" height="31" viewBox="0 0 31 31"><defs><clipPath id="ca1"><circle cx="15.500" cy="15.500" r="15.500"/></clipPath><radialGradient id="fa1" cx="50%" cy="42%" r="60%"><stop offset="0" stop-color="#a37c5e"/><stop offset="0.5" stop-color="#6e4f3a"/><stop offset="1" stop-color="#2c1d14"/></radialGradient><radialGradient id="ba1" cx="50%" cy="50%" r="55%"><stop offset="0" stop-color="#2a1c12"/><stop offset="1" stop-color="#0c0807"/></radialGradient></defs><g clip-path="url(#ca1)"><rect width="31" height="31" fill="url(#ba1)"/><g transform="translate(15.5 16) scale(1.5) translate(-15.5 -16)"><path d="M3 14C3 5 9 1 15.500 1S28 5 28 14c0 6-2 12-4 15H7C5 26 3 20 3 14z" fill="#1a110c"/><ellipse cx="15.500" cy="15" rx="6.200" ry="8.800" fill="url(#fa1)"/><path d="M9.500 17.500c.5 6.500 3 9.800 6 9.800s5.500-3.300 6-9.800c-1.200 2.600-2.500 3.600-3.300 3.900-1.200-.8-4.200-.8-5.400 0-.8-.3-2.100-1.300-3.300-3.900z" fill="#241810" opacity=".92"/><path d="M10.800 12.300c1-.7 2.500-.7 3.500-.1M16.700 12.200c1-.6 2.500-.6 3.500.1" stroke="#1a100a" stroke-width="1" fill="none"/><path d="M9.400 7c2-2.500 4-3 6-2.800 2 0 4.500.8 6.300 3.300-2-1.200-4-1.500-6.300-1.500S11.500 6 9.400 7z" fill="#1a110c"/></g></g></svg></div>
<div class="td nm" style="left:120px;top:601.5px">Громов Евгений</div>
<div class="td lk" style="left:410px;top:601.5px">5</div>
<div class="td pc g" style="left:400px;width:155px;top:601.5px">55%</div>
<div class="td" style="left:574px;top:601.5px">1 804 267</div>
<div class="td lk" style="left:738px;top:601.5px">3</div>
<div class="td pc o" style="left:728px;width:155px;top:601.5px">33%</div>
<div class="td" style="left:902px;top:601.5px">366 578</div>
<div class="td lk" style="left:1066px;top:601.5px">1</div>
<div class="td pc r" style="left:1056px;width:155px;top:601.5px">11%</div>
<div class="td" style="left:1230px;top:601.5px">67 679</div>
<div class="avw" style="left:80px;top:645.5px"><svg class="av" width="31" height="31" viewBox="0 0 31 31"><defs><clipPath id="ca2"><circle cx="15.500" cy="15.500" r="15.500"/></clipPath><linearGradient id="ba2" x1="0" y1="0" x2="1" y2="0"><stop offset="0" stop-color="#bba890"/><stop offset="0.35" stop-color="#d8cdc2"/><stop offset="1" stop-color="#efeae6"/></linearGradient><radialGradient id="fa2" cx="50%" cy="40%" r="60%"><stop offset="0" stop-color="#e8bea4"/><stop offset="1" stop-color="#c9957a"/></radialGradient></defs><g clip-path="url(#ca2)"><rect width="31" height="31" fill="url(#ba2)"/><g transform="translate(15.5 8) scale(1.15) translate(-15.5 -8)"><path d="M5 31c0-5 2.500-8 6-9h9c3.500 1 6 4 6 9z" fill="#f3efec"/><path d="M9 10c0-5 3-8 6.500-8S22 5 22 10c0 3 1.500 5 2 8s0 7-1.500 11l-3-1c.5-4 .5-8-1-11h-7c-1.500 3-1.500 7-1 11l-3 1C6 25 6 21 6.500 18S9 13 9 10z" fill="#5b3a29"/><ellipse cx="15.500" cy="10.500" rx="4.300" ry="5.700" fill="url(#fa2)"/><path d="M13 17h5v4.500c-1.500 1.200-3.500 1.200-5 0z" fill="#d9a98c"/><path d="M11 8c1-3 3-4 4.500-4s3.500 1 4.500 4c-1.500-1.500-3-2-4.500-2S12.500 6.500 11 8z" fill="#4a2e20"/><path d="M9.500 14c-.8 4-1.500 9 0 14M21.500 14c.8 4 1.500 9 0 14" stroke="#3f271b" stroke-width="1.300" fill="none"/></g></g></svg></div>
<div class="td nm" style="left:120px;top:651.0px">Морозова Вероника</div>
<div class="td lk" style="left:410px;top:651.0px">5</div>
<div class="td pc g" style="left:400px;width:155px;top:651.0px">83%</div>
<div class="td" style="left:574px;top:651.0px">1 684 199</div>
<div class="td lk" style="left:738px;top:651.0px">1</div>
<div class="td pc o" style="left:728px;width:155px;top:651.0px">16%</div>
<div class="td" style="left:902px;top:651.0px">365 698</div>
<div class="avw" style="left:80px;top:694.5px"><svg class="av" width="31" height="31" viewBox="0 0 31 31"><defs><clipPath id="ca3"><circle cx="15.500" cy="15.500" r="15.500"/></clipPath><radialGradient id="ba3" cx="50%" cy="50%" r="60%"><stop offset="0" stop-color="#fbfbfb"/><stop offset="1" stop-color="#e9e9e9"/></radialGradient><radialGradient id="fa3" cx="50%" cy="45%" r="60%"><stop offset="0" stop-color="#ecc3ab"/><stop offset="1" stop-color="#cf9c82"/></radialGradient></defs><g clip-path="url(#ca3)"><rect width="31" height="31" fill="url(#ba3)"/><g transform="translate(15.5 16) scale(1.2) translate(-15.5 -16)"><path d="M5.500 31c0-4.500 3-7 7-7.800h6c4 .8 7 3.300 7 7.800z" fill="#f7f7f7" stroke="#dcdcdc" stroke-width=".5"/><path d="M13.300 20h4.400v4.500c-1.300 1.500-3.100 1.500-4.400 0z" fill="#d7a78d"/><circle cx="15.300" cy="4.800" r="3.500" fill="#2b1f1b"/><path d="M12 2.500l1-1.500.8 1.500 1.200-1.800.8 1.800 1.400-1.300.1 1.800z" fill="#2b1f1b"/><ellipse cx="15.500" cy="13.300" rx="5.700" ry="7" fill="#2b1f1b"/><ellipse cx="15.500" cy="14.800" rx="4.400" ry="5.900" fill="url(#fa3)"/><path d="M13.600 17.800c1.200 1 2.600 1 3.800 0" stroke="#fff" stroke-width=".9" fill="none"/><path d="M12.500 13.300h2M16.500 13.300h2" stroke="#3a2a24" stroke-width=".9"/></g></g></svg></div>
<div class="td nm" style="left:120px;top:700.0px">Иванова Мария</div>
<div class="td lk" style="left:410px;top:700.0px">4</div>
<div class="td pc g" style="left:400px;width:155px;top:700.0px">57%</div>
<div class="td" style="left:574px;top:700.0px">1 636 724</div>
<div class="td lk" style="left:738px;top:700.0px">3</div>
<div class="td pc o" style="left:728px;width:155px;top:700.0px">42%</div>
<div class="td" style="left:902px;top:700.0px">7 317 642</div>
<div class="avw" style="left:80px;top:744.0px"><svg class="av" width="31" height="31" viewBox="0 0 31 31"><defs><clipPath id="ca4"><circle cx="15.500" cy="15.500" r="15.500"/></clipPath><radialGradient id="ba4" cx="60%" cy="35%" r="75%"><stop offset="0" stop-color="#5a6a3e"/><stop offset="0.5" stop-color="#2c3a26"/><stop offset="1" stop-color="#141c14"/></radialGradient><radialGradient id="fa4" cx="50%" cy="40%" r="60%"><stop offset="0" stop-color="#e9bb9d"/><stop offset="1" stop-color="#c28a6a"/></radialGradient></defs><g clip-path="url(#ca4)"><rect width="31" height="31" fill="url(#ba4)"/><g transform="translate(15.5 17) scale(1.2) translate(-15.5 -17)"><path d="M8 12c0-6 3-9 7.500-9S23 6 23 12c0 4 1.500 8 2 13l-4 3H10l-4-3c.5-5 2-9 2-13z" fill="#7a4526"/><path d="M5 31c0-5 3-7.500 7-8.300h7c4 .8 7 3.300 7 8.300z" fill="#ececec"/><path d="M7 31l2.500-6M10.500 31l1.800-7.500M14 31l.5-7M17.500 31l-.5-7M21 31l-1.800-7.500M24.500 31L22 25" stroke="#1e1e22" stroke-width="1.300"/><path d="M13.200 19h4.600v4.800c-1.400 1.400-3.200 1.400-4.600 0z" fill="#cf9b7c"/><ellipse cx="15.500" cy="12.500" rx="4.600" ry="6.200" fill="url(#fa4)"/><path d="M10.500 11c.5-4 2.500-6 5-6s4.500 2 5 6c-1.500-2.500-3-3.500-5-3.500S12 8.500 10.500 11z" fill="#6a3a1e"/><path d="M9.500 13c-1 5-1 9 .5 12l2-1c-1.500-3-1.500-7-1-10zM21.500 13c1 5 1 9-.5 12l-2-1c1.500-3 1.500-7 1-10z" fill="#8a4f2a"/></g></g></svg></div>
<div class="td nm" style="left:120px;top:749.5px">Волкова Софья</div>
<div class="td lk" style="left:410px;top:749.5px">4</div>
<div class="td pc g" style="left:400px;width:155px;top:749.5px">66%</div>
<div class="td" style="left:574px;top:749.5px">1 110 995</div>
<div class="td lk" style="left:738px;top:749.5px">1</div>
<div class="td pc o" style="left:728px;width:155px;top:749.5px">16%</div>
<div class="td" style="left:902px;top:749.5px">587 632</div>
<div class="td lk" style="left:1066px;top:749.5px">1</div>
<div class="td pc r" style="left:1056px;width:155px;top:749.5px">16%</div>
<div class="td" style="left:1230px;top:749.5px">734 532</div>
<div class="avw" style="left:80px;top:793.5px"><svg class="av" width="31" height="31" viewBox="0 0 31 31"><defs><clipPath id="ca5"><circle cx="15.500" cy="15.500" r="15.500"/></clipPath><radialGradient id="ba5" cx="50%" cy="40%" r="70%"><stop offset="0" stop-color="#b5c6d6"/><stop offset="1" stop-color="#7f95aa"/></radialGradient><radialGradient id="fa5" cx="50%" cy="45%" r="60%"><stop offset="0" stop-color="#e3b395"/><stop offset="1" stop-color="#b98465"/></radialGradient></defs><g clip-path="url(#ca5)"><rect width="31" height="31" fill="url(#ba5)"/><g transform="translate(15.5 14) scale(1.5) translate(-15.5 -14)"><path d="M3 31c0-5.500 4-8 8.500-8.800h8c4.500 .8 8.500 3.300 8.500 8.800z" fill="#5d6b79"/><path d="M11.800 22.500l3.700 5.500 3.700-5.500-1.200-1h-5z" fill="#cfe0f0"/><path d="M14.500 24.500l1 1.500 1-1.500v6.500h-2z" fill="#3a4a5c"/><path d="M13 19h5v4c-1.500 1.600-3.500 1.600-5 0z" fill="#c08e70"/><ellipse cx="15.500" cy="11.800" rx="5.500" ry="7" fill="#2a201c"/><ellipse cx="15.500" cy="13.500" rx="4.700" ry="6.300" fill="url(#fa5)"/><path d="M10.600 11.500c0-4.500 2-6.800 4.900-6.800s4.900 2.300 4.900 6.800c-1-2.500-2.500-3.500-4.900-3.500s-3.900 1-4.900 3.500z" fill="#241a16"/><path d="M11.500 16c.8 3 2.300 4.300 4 4.300s3.200-1.300 4-4.300c-1 1.500-2.500 2-4 2s-3-.5-4-2z" fill="#6a4a3a" opacity=".55"/><path d="M13.500 16.800c1.200.9 2.800.9 4 0" stroke="#fff" stroke-width=".9" fill="none"/></g></g></svg></div>
<div class="td nm" style="left:120px;top:799.0px">Петров Владислав</div>
<div class="td lk" style="left:410px;top:799.0px">5</div>
<div class="td pc g" style="left:400px;width:155px;top:799.0px">50%</div>
<div class="td" style="left:574px;top:799.0px">1 014 541</div>
<div class="td lk" style="left:738px;top:799.0px">4</div>
<div class="td pc o" style="left:728px;width:155px;top:799.0px">40%</div>
<div class="td" style="left:902px;top:799.0px">9 381 236</div>
<div class="td lk" style="left:1066px;top:799.0px">1</div>
<div class="td pc r" style="left:1056px;width:155px;top:799.0px">10%</div>
<div class="td" style="left:1230px;top:799.0px">6 654</div>
<div class="avw" style="left:80px;top:842.5px"><svg class="av" width="31" height="31" viewBox="0 0 31 31"><defs><clipPath id="ca6"><circle cx="15.500" cy="15.500" r="15.500"/></clipPath><linearGradient id="ba6" x1="0" y1="0" x2="1" y2="1"><stop offset="0" stop-color="#9a9a9a"/><stop offset="0.5" stop-color="#c9c9c9"/><stop offset="1" stop-color="#e2e2e2"/></linearGradient><radialGradient id="fa6" cx="45%" cy="35%" r="65%"><stop offset="0" stop-color="#e6e6e6"/><stop offset="0.6" stop-color="#b4b4b4"/><stop offset="1" stop-color="#7c7c7c"/></radialGradient></defs><g clip-path="url(#ca6)"><rect width="31" height="31" fill="url(#ba6)"/><g transform="translate(15.5 14) scale(1.35) translate(-15.5 -14)"><path d="M2 31c0-4 4-6.500 9-7h9c5 .5 9 3 9 7z" fill="#5c5c5c"/><ellipse cx="15.500" cy="11" rx="6" ry="7.500" fill="url(#fa6)"/><path d="M9 12c-.5 8 2.500 16 6.500 16s7-8 6.500-16c-.8 2.500-1.800 3.600-2.800 3.900-1.500-1-5.900-1-7.400 0-1-.3-2-1.400-2.800-3.900z" fill="#454545"/><path d="M11 21c1 4 2.800 6.500 4.500 6.500S19 25 20 21c-1.500 2-3 2.800-4.500 2.800S12.500 23 11 21z" fill="#7a7a7a"/><path d="M11.300 10h3M16.700 10h3" stroke="#4a4a4a" stroke-width="1"/></g></g></svg></div>
<div class="td nm" style="left:120px;top:848.0px">Гагарин Юрий</div>
<div class="td lk" style="left:410px;top:848.0px">1</div>
<div class="td pc g" style="left:400px;width:155px;top:848.0px">50%</div>
<div class="td" style="left:574px;top:848.0px">786 783</div>
<div class="td lk" style="left:738px;top:848.0px">1</div>
<div class="td pc o" style="left:728px;width:155px;top:848.0px">50%</div>
<div class="td" style="left:902px;top:848.0px">35 476</div>
<div class="avw" style="left:80px;top:892.0px"><svg class="av" width="31" height="31" viewBox="0 0 31 31"><defs><clipPath id="ca7"><circle cx="15.500" cy="15.500" r="15.500"/></clipPath><linearGradient id="fa7" x1="0" y1="0" x2="1" y2="0"><stop offset="0" stop-color="#6a4a3c"/><stop offset="0.45" stop-color="#c79a80"/><stop offset="1" stop-color="#b08268"/></linearGradient></defs><g clip-path="url(#ca7)"><rect width="31" height="31" fill="#090d10"/><g transform="translate(15.5 15.5) scale(1.0) translate(-15.5 -15.5)"><path d="M13 6c4-2.500 10-1.500 13 2 2 4 2 10 0 15-1.500 3.500-5 6.500-9 6.500-3 0-4-3-4-8z" fill="url(#fa7)"/><path d="M12.500 2.500c5-2 12 0 15.500 5.500 0 2-.5 3-1 4-2-3.500-7-5-12-3.500-1 1.500-1.500 3.500-1.500 6H11V5z" fill="#0d1216"/><path d="M13.500 20.500c2 1.500 6.500 2 10.500-.5-.5 5-3.500 9.500-7.500 9.500-2.500 0-3-4-3-9z" fill="#17110f" opacity=".85"/><path d="M17.500 12.500h3.200M23.300 12.500h2.500" stroke="#20262c" stroke-width="1.200"/><circle cx="19" cy="14" r=".8" fill="#4a6a8a"/><path d="M0 0h13v31H0z" fill="#070a0c"/></g></g></svg></div>
<div class="td nm" style="left:120px;top:897.5px">Сидоров Юрий</div>
<div class="td lk" style="left:410px;top:897.5px">1</div>
<div class="td pc g" style="left:400px;width:155px;top:897.5px">33%</div>
<div class="td" style="left:574px;top:897.5px">785 469</div>
<div class="td lk" style="left:738px;top:897.5px">1</div>
<div class="td pc o" style="left:728px;width:155px;top:897.5px">33%</div>
<div class="td" style="left:902px;top:897.5px">98 752</div>
<div class="td lk" style="left:1066px;top:897.5px">1</div>
<div class="td pc r" style="left:1056px;width:155px;top:897.5px">33%</div>
<div class="td" style="left:1230px;top:897.5px">34 646</div>
<div class="avw" style="left:80px;top:941.5px"><svg class="av" width="31" height="31" viewBox="0 0 31 31"><circle cx="15.500" cy="15.500" r="15.500" fill="#f2557e"/><path d="M15.800 5c-2.300 0-3.600 1.700-3.600 4 0 1.500.500 2.900 1.300 3.800.200.900.100 1.900-.300 2.500-.300.500-.800.800-1.400 1l-2.600.900c-1.200.400-2 1.300-2 2.600V24h17.400v-4.200c0-1.300-.800-2.200-2-2.600l-2.600-.900c-.600-.200-1.100-.500-1.400-1-.400-.600-.500-1.600-.300-2.500.800-.900 1.300-2.300 1.300-3.800 0-2.300-1.300-4-3.800-4z" fill="#fff"/></svg></div>
<div class="td nm" style="left:120px;top:947.0px">Системы Администратор</div>
<div class="td lk" style="left:410px;top:947.0px">724</div>
<div class="td pc g" style="left:400px;width:155px;top:947.0px">91%</div>
<div class="td" style="left:574px;top:947.0px">506 115</div>
<div class="td lk" style="left:738px;top:947.0px">56</div>
<div class="td pc o" style="left:728px;width:155px;top:947.0px">7%</div>
<div class="td" style="left:902px;top:947.0px">53 953</div>
<div class="td lk" style="left:1066px;top:947.0px">8</div>
<div class="td pc r" style="left:1056px;width:155px;top:947.0px">1%</div>
<div class="td" style="left:1230px;top:947.0px">7 422</div>
<div class="avw" style="left:80px;top:990.5px"><svg class="av" width="31" height="31" viewBox="0 0 31 31"><defs><clipPath id="ca9"><circle cx="15.500" cy="15.500" r="15.500"/></clipPath><radialGradient id="ba9" cx="50%" cy="50%" r="60%"><stop offset="0" stop-color="#ffffff"/><stop offset="1" stop-color="#ececec"/></radialGradient><radialGradient id="fa9" cx="50%" cy="40%" r="60%"><stop offset="0" stop-color="#dcdcdc"/><stop offset="1" stop-color="#9c9c9c"/></radialGradient></defs><g clip-path="url(#ca9)"><rect width="31" height="31" fill="url(#ba9)"/><g transform="translate(15.5 13) scale(1.3) translate(-15.5 -13)"><path d="M4 31c0-4.500 3.500-7 8-7.700h7c4.500 .7 8 3.200 8 7.700z" fill="#fbfbfb" stroke="#dedede" stroke-width=".6"/><path d="M13 19.500h5v4.200c-1.500 1.400-3.500 1.400-5 0z" fill="#b5b5b5"/><ellipse cx="15.500" cy="10.800" rx="5.300" ry="6.300" fill="#262626"/><ellipse cx="15.500" cy="12.800" rx="4.500" ry="6" fill="url(#fa9)"/><path d="M10.900 10.500c.2-3.800 2-5.800 4.600-5.800s4.400 2 4.600 5.800c-1.200-2-2.600-2.800-4.600-2.800s-3.400.8-4.600 2.800z" fill="#1e1e1e"/><path d="M11 14c.3 4.500 2.200 7.300 4.500 7.300s4.200-2.800 4.500-7.300c-.8 1.800-1.600 2.500-2.300 2.700-1-.7-3.400-.7-4.400 0-.7-.2-1.500-.9-2.300-2.700z" fill="#2e2e2e"/><path d="M12.300 11.500h2.300M16.400 11.500h2.300" stroke="#2a2a2a" stroke-width="1"/></g></g></svg></div>
<div class="td nm" style="left:120px;top:996.0px">Руслан</div>
<div class="td lk" style="left:410px;top:996.0px">2</div>
<div class="td pc g" style="left:400px;width:155px;top:996.0px">50%</div>
<div class="td" style="left:574px;top:996.0px">49 143</div>
<div class="td lk" style="left:738px;top:996.0px">2</div>
<div class="td pc o" style="left:728px;width:155px;top:996.0px">50%</div>
<div class="td" style="left:902px;top:996.0px">680 019</div>
<div class="td nm2" style="left:80px;top:1042.0px">Всего</div>
<div class="td" style="left:410px;top:1042.0px">751</div>
<div class="td" style="left:574px;top:1042.0px">9 378 236</div>
<div class="td" style="left:738px;top:1042.0px">72</div>
<div class="td" style="left:902px;top:1042.0px">18 886 986</div>
<div class="td" style="left:1066px;top:1042.0px">12</div>
<div class="td" style="left:1230px;top:1042.0px">850 933</div>
<div class="xls">ЭКСПОРТ В XLS</div>
</div>
</body></html>
